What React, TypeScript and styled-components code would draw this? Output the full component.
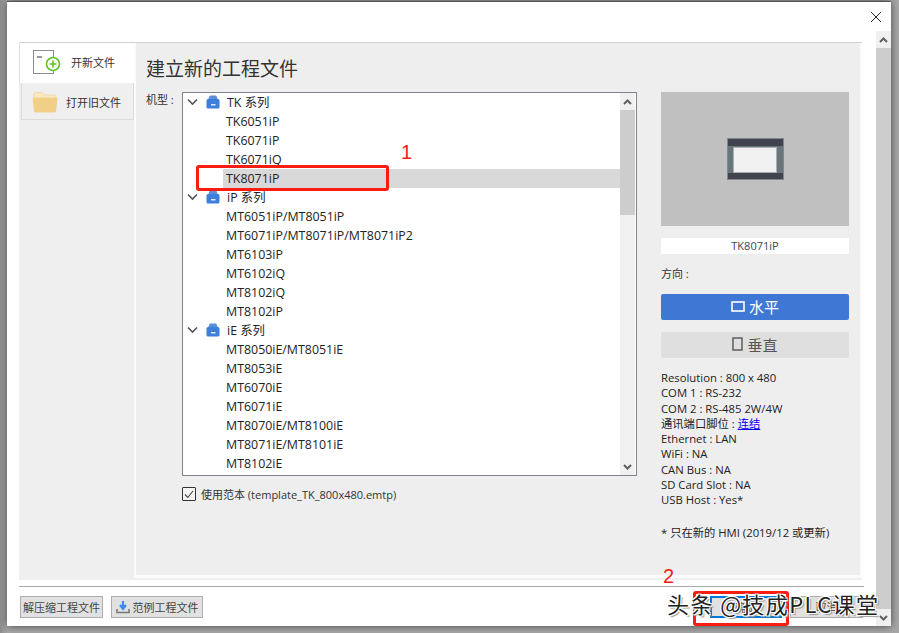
import React from "react";
import styled, { createGlobalStyle } from "styled-components";

const Global = createGlobalStyle`
  html, body { margin: 0; padding: 0; width: 899px; height: 633px; overflow: hidden; background: #a9a9a9; }
  body { font-family: "Open Sans", "Noto Sans CJK SC", sans-serif; color: #222; }
`;
const Stage = styled.div`
  position: relative; width: 899px; height: 633px; padding: 1px 0 0 7px; box-sizing: border-box;
  background: linear-gradient(90deg, #8e8e8e 0, #a8a8a8 7px);
`;
const Window = styled.div`
  width: 884px; height: 625px; background: #fff; display: flex; flex-direction: column;
  border-top: 1px solid #555; box-sizing: border-box; box-shadow: 0 0 8px #444;
`;
const TitleBar = styled.div`
  height: 29px; flex: none; display: flex; justify-content: flex-end; align-items: center; padding-right: 9px;
`;
const Body = styled.div`display: flex; flex: 1; min-height: 0;`;
const Content = styled.div`flex: 1; padding: 11px 0 0 12px; display: flex; flex-direction: column; min-width: 0;`;
const PageScroll = styled.div`
  width: 15px; flex: none; background: #cdcdcd; display: flex; flex-direction: column; justify-content: space-between;
`;
const ArrowCell = styled.div`
  height: 17px; background: #f0f0f0; display: flex; align-items: center; justify-content: center; flex: none;
`;
const Panel = styled.div`
  width: 843px; height: 538px; flex: none; display: flex; background: #efefef; border-top: 1px solid #d4d4d4; box-sizing: border-box;
`;
const Sidebar = styled.div`width: 115px; flex: none; display: flex; flex-direction: column;`;
const TabNew = styled.div`
  height: 40px; background: #fff; display: flex; align-items: center; gap: 10px; padding: 0 0 2px 13px;
  font-size: 11px; color: #333; border-left: 1px solid #e0e0e0; box-sizing: border-box;
`;
const TabOld = styled.div`
  height: 37px; width: 113px; margin-left: 2px; border: 1px solid #dcdcdc; border-top: 0; box-sizing: border-box;
  display: flex; align-items: center; gap: 8px; padding: 2px 0 0 10px; font-size: 11px; color: #333;
`;
const Main = styled.div`
  flex: 1; min-width: 0; border-left: 2px solid #fbfbfb; border-right: 2px solid #fbfbfb; border-bottom: 3px solid #fbfbfb;
  padding: 0 0 0 10px; display: flex; flex-direction: column; background: #eee; height: 535px; box-sizing: border-box;
`;
const Title = styled.div`
  font-size: 19px; line-height: 26px; height: 26px; margin-top: 12px; color: #333; font-family: "Noto Sans CJK SC", sans-serif;
`;
const Columns = styled.div`display: flex; margin-top: 11px; flex: 1;`;
const Left = styled.div`width: 515px; flex: none;`;
const TreeRow = styled.div`display: flex;`;
const ModelLabel = styled.div`width: 36px; flex: none; font-size: 11px; line-height: 16px; color: #333;`;
const TreeBox = styled.div`
  width: 455px; height: 384px; box-sizing: border-box; border: 1px solid #7d828c; background: #fff; display: flex; overflow: hidden;
`;
const List = styled.div`flex: 1; min-width: 0; overflow: hidden;`;
const Row = styled.div<{ $selected?: boolean }>`
  height: 19px; line-height: 19px; font-size: 12.4px; color: #222; margin-left: 40px; padding-left: 3px;
  background: ${(p) => (p.$selected ? "#d9d9d9" : "transparent")}; white-space: nowrap;
`;
const GroupRow = styled.div`
  height: 19px; box-sizing: border-box; display: flex; align-items: center; font-size: 12.4px; color: #222; padding: 0 0 2px 4px;
  span { margin-left: 7px; }
`;
const Chevron = styled.svg`width: 11px; height: 8px; margin-right: 6px; flex: none;`;
const TreeScroll = styled.div`width: 15px; flex: none; margin-right: 1px; background: #f0f0f0; display: flex; flex-direction: column;`;
const TreeThumb = styled.div`height: 105px; background: #cdcdcd; flex: none;`;
const TreeSpacer = styled.div`flex: 1;`;
const TemplateRow = styled.div`
  display: flex; align-items: center; margin: 10px 0 0 36px; font-size: 11px; color: #333; gap: 5px;
`;
const Check = styled.div`
  width: 12px; height: 12px; border: 1px solid #333; display: flex; align-items: center; justify-content: center; background: #f4f4f4; border-radius: 1px;
`;
const Right = styled.div`width: 188px; flex: none; display: flex; flex-direction: column;`;
const Preview = styled.div`height: 134px; background: #c0c0c0; display: flex; align-items: center; justify-content: center;`;
const Device = styled.div`
  width: 57px; height: 42px; box-sizing: border-box; background: #68757b; display: flex; flex-direction: column; align-items: center; justify-content: center;
  border-top: 8px solid #41444e; border-bottom: 7px solid #41444e; outline: 1px solid #80878c; outline-offset: -1px;
`;
const Screen = styled.div`width: 44px; height: 26px; background: #f0f0f0; border: 1px solid #a8b0b4; box-sizing: border-box;`;
const NameBox = styled.div`
  margin-top: 12px; height: 16px; background: #fff; text-align: center; font-size: 11px; line-height: 16px; color: #445;
`;
const Direction = styled.div`margin-top: 12px; font-size: 11px; line-height: 16px; color: #333;`;
const OrientButton = styled.div<{ $active?: boolean }>`
  margin-top: 12px; height: 26px; box-sizing: border-box; padding-bottom: 2px; border-radius: 2px; display: flex; align-items: center; justify-content: center; gap: 4px;
  background: ${(p) => (p.$active ? "#3f78d4" : "#dfdfdf")}; color: ${(p) => (p.$active ? "#fff" : "#555")}; font-size: 15px;
  font-family: "Noto Sans CJK SC", sans-serif;
`;
const Specs = styled.div`margin-top: 12px; font-size: 11.3px; line-height: 15.25px; color: #222;`;
const SpecLine = styled.div`white-space: nowrap;`;
const SpecNote = styled.div`margin-top: 18px; white-space: nowrap;`;
const LinkText = styled.a`color: #00e; text-decoration: underline;`;
const Separator = styled.div`width: 845px; height: 1px; background: #aaa; margin-top: 6px; flex: none;`;
const Footer = styled.div`display: flex; align-items: flex-start; margin-top: 9px; width: 844px; padding-left: 1px; box-sizing: border-box;`;
const FootButton = styled.div<{ $w: number; $primary?: boolean }>`
  width: ${(p) => p.$w}px; height: 22px; box-sizing: border-box; background: #e1e1e1;
  border: ${(p) => (p.$primary ? "2px solid #0078d7" : "1px solid #adadad")};
  display: flex; align-items: center; justify-content: center; gap: 3px; font-size: 11px; color: #444;
`;
const Gap = styled.div<{ $w: number }>`width: ${(p) => p.$w}px; flex: none;`;
const Grow = styled.div`flex: 1;`;
const RedBox = styled.div<{ $l: number; $t: number; $w: number; $h: number }>`
  position: absolute; left: ${(p) => p.$l}px; top: ${(p) => p.$t}px; width: ${(p) => p.$w}px; height: ${(p) => p.$h}px;
  border: 3px solid #f91c10; border-radius: 3px; box-sizing: border-box; pointer-events: none;
`;
const RedNum = styled.div<{ $l: number; $t: number }>`
  position: absolute; left: ${(p) => p.$l}px; top: ${(p) => p.$t}px; color: #f91c10; font-size: 20px; line-height: 24px; font-family: "Liberation Sans", sans-serif;
`;
const Watermark = styled.div`
  position: absolute; left: 667px; top: 589px; font-size: 22px; line-height: 28px; color: #222; white-space: nowrap; letter-spacing: 1.4px;
  font-family: "Noto Sans CJK SC", sans-serif;
  text-shadow: -1px -1px 0 #fff, 1px -1px 0 #fff, -1px 1px 0 #fff, 1px 1px 0 #fff, 2px 2px 1px #999;
`;

const Up = () => (
  <svg width="9" height="6" viewBox="0 0 9 6"><path d="M1 5 L4.5 1.5 L8 5" fill="none" stroke="#606060" strokeWidth="2" /></svg>
);
const Down = () => (
  <svg width="9" height="6" viewBox="0 0 9 6"><path d="M1 1 L4.5 4.5 L8 1" fill="none" stroke="#606060" strokeWidth="2" /></svg>
);
const Series = ({ label }: { label: string }) => (
  <GroupRow>
    <Chevron viewBox="0 0 11 8"><path d="M1 1.5 L5.5 6 L10 1.5" fill="none" stroke="#555" strokeWidth="1.6" /></Chevron>
    <svg width="14" height="14" viewBox="0 0 14 14" style={{ marginLeft: 2 }}>
      <path d="M2 5 L3.5 1 Q3.8 0.5 4.5 0.5 H9.5 Q10.2 0.5 10.5 1 L12 5 Z" fill="#5b8fd8" />
      <rect x="0.5" y="4" width="13" height="9.5" rx="1.5" fill="#3f7fdc" />
      <rect x="5" y="9" width="4.5" height="1.5" fill="#dfeaf8" />
    </svg>
    <span>{label}</span>
  </GroupRow>
);
const tk = ["TK6051iP", "TK6071iP", "TK6071iQ", "TK8071iP"];
const ip = ["MT6051iP/MT8051iP", "MT6071iP/MT8071iP/MT8071iP2", "MT6103iP", "MT6102iQ", "MT8102iQ", "MT8102iP"];
const ie = ["MT8050iE/MT8051iE", "MT8053iE", "MT6070iE", "MT6071iE", "MT8070iE/MT8100iE", "MT8071iE/MT8101iE", "MT8102iE"];

export default function App() {
  return (
    <Stage>
      <Global />
      <Window>
        <TitleBar>
          <svg width="12" height="12" viewBox="0 0 12 12"><path d="M1 1 L11 11 M11 1 L1 11" stroke="#222" strokeWidth="1" fill="none" /></svg>
        </TitleBar>
        <Body>
          <Content>
            <Panel>
              <Sidebar>
                <TabNew>
                  <svg width="28" height="25" viewBox="0 0 28 25">
                    <rect x="0.5" y="0.5" width="20" height="23" fill="#fff" stroke="#8c8c8c" />
                    <path d="M4 7 H9" stroke="#999" strokeWidth="2" />
                    <circle cx="20" cy="14" r="6.5" fill="#fff" stroke="#5fc41e" strokeWidth="1.6" />
                    <path d="M20 10.5 V17.5 M16.5 14 H23.5" stroke="#5fc41e" strokeWidth="1.6" />
                  </svg>
                  开新文件
                </TabNew>
                <TabOld>
                  <svg width="26" height="21" viewBox="0 0 26 21">
                    <path d="M2 5 V2 Q2 0.5 3.5 0.5 H10 L12 3 H23 Q24 3 24 4 V6 H2 Z" fill="#fbe8bf" stroke="#e8cc90" strokeWidth="0.6" />
                    <path d="M0.5 6 H25.5 L24 19 Q23.8 20.5 22 20.5 H4 Q2.2 20.5 2 19 Z" fill="#f2cf86" />
                  </svg>
                  打开旧文件
                </TabOld>
              </Sidebar>
              <Main>
                <Title>建立新的工程文件</Title>
                <Columns>
                  <Left>
                    <TreeRow>
                      <ModelLabel>机型 :</ModelLabel>
                      <TreeBox>
                        <List>
                          <Series label="TK 系列" />
                          {tk.map((m) => <Row key={m} $selected={m === "TK8071iP"}>{m}</Row>)}
                          <Series label="iP 系列" />
                          {ip.map((m) => <Row key={m}>{m}</Row>)}
                          <Series label="iE 系列" />
                          {ie.map((m) => <Row key={m}>{m}</Row>)}
                        </List>
                        <TreeScroll>
                          <ArrowCell><Up /></ArrowCell>
                          <TreeThumb />
                          <TreeSpacer />
                          <ArrowCell><Down /></ArrowCell>
                        </TreeScroll>
                      </TreeBox>
                    </TreeRow>
                    <TemplateRow>
                      <Check>
                        <svg width="10" height="9" viewBox="0 0 10 9"><path d="M1 4.5 L3.8 7.5 L9 1" fill="none" stroke="#444" strokeWidth="1.1" /></svg>
                      </Check>
                      使用范本 (template_TK_800x480.emtp)
                    </TemplateRow>
                  </Left>
                  <Right>
                    <Preview>
                      <Device><Screen /></Device>
                    </Preview>
                    <NameBox>TK8071iP</NameBox>
                    <Direction>方向 :</Direction>
                    <OrientButton $active>
                      <svg width="14" height="11" viewBox="0 0 14 11"><rect x="1" y="1" width="12" height="9" fill="none" stroke="#fff" strokeWidth="1.6" /></svg>
                      水平
                    </OrientButton>
                    <OrientButton>
                      <svg width="11" height="14" viewBox="0 0 11 14"><rect x="1" y="1" width="9" height="12" fill="none" stroke="#666" strokeWidth="1.6" /></svg>
                      垂直
                    </OrientButton>
                    <Specs>
                      <SpecLine>Resolution : 800 x 480</SpecLine>
                      <SpecLine>COM 1 : RS-232</SpecLine>
                      <SpecLine>COM 2 : RS-485 2W/4W</SpecLine>
                      <SpecLine>通讯端口脚位 : <LinkText>连结</LinkText></SpecLine>
                      <SpecLine>Ethernet : LAN</SpecLine>
                      <SpecLine>WiFi : NA</SpecLine>
                      <SpecLine>CAN Bus : NA</SpecLine>
                      <SpecLine>SD Card Slot : NA</SpecLine>
                      <SpecLine>USB Host : Yes*</SpecLine>
                      <SpecNote>* 只在新的 HMI (2019/12 或更新)</SpecNote>
                    </Specs>
                  </Right>
                </Columns>
              </Main>
            </Panel>
            <Separator />
            <Footer>
              <FootButton $w={83}>解压缩工程文件</FootButton>
              <Gap $w={8} />
              <FootButton $w={92}>
                <svg width="14" height="13" viewBox="0 0 14 13">
                  <path d="M7 0 V6 M4 4 L7 8 L10 4" stroke="#3f8ae8" strokeWidth="2.2" fill="none" />
                  <path d="M1 8 V11.5 H13 V8" stroke="#777" strokeWidth="1.6" fill="none" />
                </svg>
                范例工程文件
              </FootButton>
              <Grow />
              <FootButton $w={72} $primary>确定</FootButton>
              <Gap $w={8} />
              <FootButton $w={73}>取消</FootButton>
            </Footer>
          </Content>
          <PageScroll>
            <ArrowCell><Up /></ArrowCell>
            <ArrowCell><Down /></ArrowCell>
          </PageScroll>
        </Body>
      </Window>
      <RedBox $l={196} $t={165} $w={193} $h={26} />
      <RedBox $l={693} $t={591} $w={96} $h={35} />
      <RedNum $l={401} $t={140}>1</RedNum>
      <RedNum $l={663} $t={564}>2</RedNum>
      <Watermark>头条 @技成PLC课堂</Watermark>
    </Stage>
  );
}
